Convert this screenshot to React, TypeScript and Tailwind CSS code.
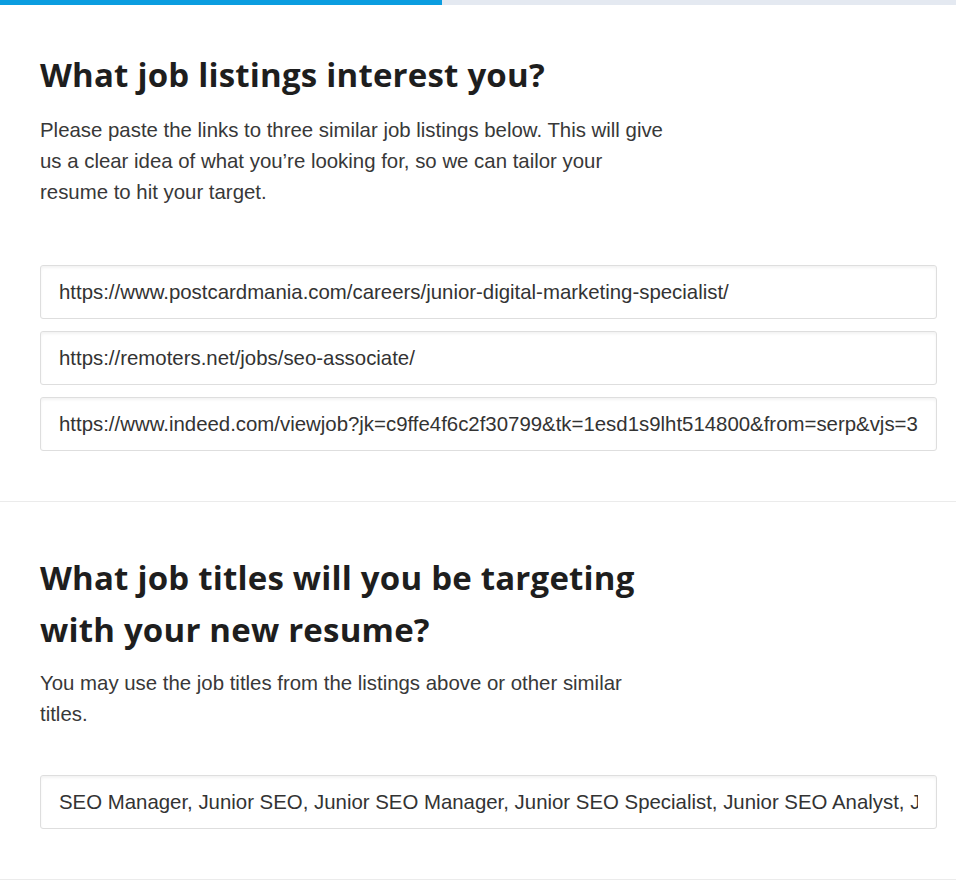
export default function App() {
  const links = [
    "https://www.postcardmania.com/careers/junior-digital-marketing-specialist/",
    "https://remoters.net/jobs/seo-associate/",
    "https://www.indeed.com/viewjob?jk=c9ffe4f6c2f30799&tk=1esd1s9lht514800&from=serp&vjs=3",
  ];

  const heading =
    "max-w-[630px] text-[33px] font-bold leading-[52px] tracking-[0.2px] text-[#1e1e1e] font-['Open_Sans','Liberation_Sans',sans-serif]";
  const field =
    "h-[54px] w-full rounded-[3px] border border-[#dedede] bg-white px-[18px] text-[20.4px] text-[#333] shadow-[inset_0_2px_3px_rgba(0,0,0,0.05)] outline-none";

  return (
    <div className="min-h-screen bg-white text-[#333] font-['Liberation_Sans',Arial,sans-serif]">
      {/* progress */}
      <div className="flex h-[5px] w-full bg-[#e4e9f1]">
        <div className="h-full w-[442px] bg-[#0b9de0]" />
      </div>

      <section className="border-b border-[#ebebeb] pl-[40px] pr-[19px] pt-[44px] pb-[50px]">
        <h2 className={heading}>What job listings interest you?</h2>
        <p className="mt-[14px] max-w-[630px] text-[20.4px] leading-[31px] text-[#383838]">
          Please paste the links to three similar job listings below. This will give us a clear idea of what
          you’re looking for, so we can tailor your resume to hit your target.
        </p>
        <div className="mt-[57px] flex flex-col gap-[12px]">
          {links.map((l) => (
            <input key={l} readOnly value={l} className={field} />
          ))}
        </div>
      </section>

      <section className="border-b border-[#ebebeb] pl-[40px] pr-[19px] pt-[50px] pb-[50px]">
        <h2 className={heading}>What job titles will you be targeting with your new resume?</h2>
        <p className="mt-[12px] max-w-[630px] text-[20.4px] leading-[31px] text-[#383838]">
          You may use the job titles from the listings above or other similar titles.
        </p>
        <div className="mt-[45px]">
          <input
            readOnly
            value="SEO Manager, Junior SEO, Junior SEO Manager, Junior SEO Specialist, Junior SEO Analyst, Junior SEO Associate"
            className={field}
          />
        </div>
      </section>
    </div>
  );
}
